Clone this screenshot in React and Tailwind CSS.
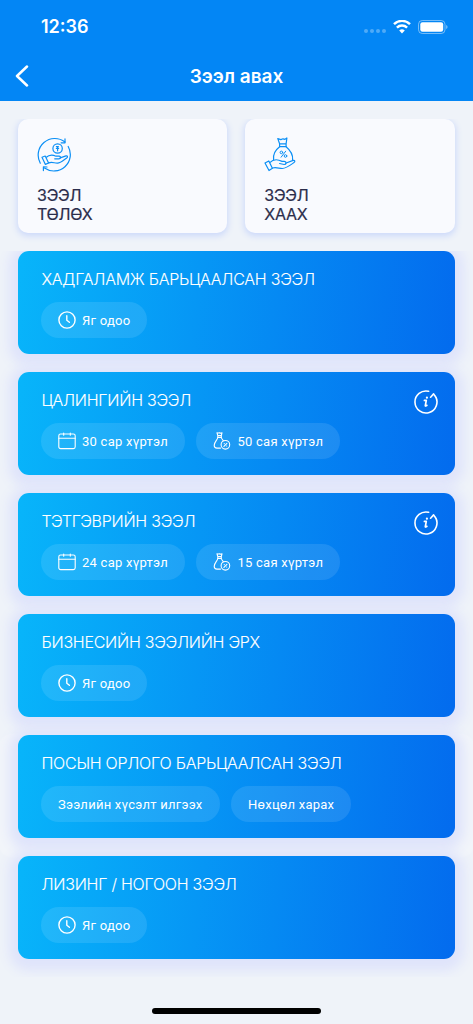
import React from 'react';

const LOANS = [
  { title: 'ХАДГАЛАМЖ БАРЬЦААЛСАН ЗЭЭЛ', chips: [{ icon: 'clock', label: 'Яг одоо' }] },
  { title: 'ЦАЛИНГИЙН ЗЭЭЛ', info: true, chips: [{ icon: 'calendar', label: '30 сар хүртэл' }, { icon: 'bag', label: '50 сая хүртэл' }] },
  { title: 'ТЭТГЭВРИЙН ЗЭЭЛ', info: true, chips: [{ icon: 'calendar', label: '24 сар хүртэл' }, { icon: 'bag', label: '15 сая хүртэл' }] },
  { title: 'БИЗНЕСИЙН ЗЭЭЛИЙН ЭРХ', chips: [{ icon: 'clock', label: 'Яг одоо' }] },
  { title: 'ПОСЫН ОРЛОГО БАРЬЦААЛСАН ЗЭЭЛ', panel: true, chips: [{ label: 'Зээлийн хүсэлт илгээх' }, { label: 'Нөхцөл харах' }] },
  { title: 'ЛИЗИНГ / НОГООН ЗЭЭЛ', chips: [{ icon: 'clock', label: 'Яг одоо' }] },
];

function ClockIcon() {
  return (
    <svg width="18" height="18" viewBox="0 0 18 18" fill="none" stroke="currentColor" strokeWidth="1.4" strokeLinecap="round" strokeLinejoin="round">
      <circle cx="9" cy="9" r="8.1" />
      <path d="M8.8 4.8v4.4l2.6 2" />
    </svg>
  );
}

function CalendarIcon() {
  return (
    <svg width="18" height="18" viewBox="0 0 18 18" fill="none" stroke="currentColor" strokeWidth="1.1" strokeLinecap="round">
      <rect x="0.8" y="2" width="16.4" height="14.6" rx="1.8" />
      <path d="M0.8 6.2h16.4M5.7 1v2.2M12.3 1v2.2" />
    </svg>
  );
}

function BagIcon() {
  return (
    <svg width="18" height="18" viewBox="0 0 18 18" fill="none" stroke="currentColor" strokeWidth="1.1" strokeLinecap="round" strokeLinejoin="round">
      <path d="M4 .8c1 .6 1.5-.2 2.5.1 1 .3 1.6.4 2.5-.1l-.7 2.8H4.8zM4.8 3.6v1.9h3.5V3.6" />
      <path d="M4.8 5.5C4.3 8 1.3 10 1.2 13.2c0 2.1 1 2.9 2.8 2.9h3.5M8.3 5.5c.3 1.3 1.1 2.2 2 3.2" />
      <circle cx="12.4" cy="12.8" r="4.3" />
      <path d="m10.9 14.3 3-3M11.2 11.6h.1M13.6 14h.1" />
    </svg>
  );
}

const CHIP_ICONS = { clock: <ClockIcon />, calendar: <CalendarIcon />, bag: <BagIcon /> };

function InfoIcon() {
  return (
    <svg className="mt-[2px] mr-px" width="24" height="24" viewBox="0 0 24 24" fill="none" stroke="currentColor" strokeWidth="1.6" strokeLinecap="round" strokeLinejoin="round">
      <path d="M14.6 1.3A11 11 0 1 0 21.2 6M16.6 7.2l3-3.3 2.6 3.8" />
      <path d="M10.4 10.4h1.9l-1 5.2c-.1.7.8.5 1.6-.2" strokeWidth="1.7" />
      <circle cx="12.9" cy="7.7" r="1.1" fill="currentColor" stroke="none" />
    </svg>
  );
}

function RepayIcon() {
  return (
    <svg width="36" height="36" viewBox="0 0 36 36" fill="none" stroke="currentColor" strokeWidth="1.2" strokeLinecap="round" strokeLinejoin="round">
      <path d="M3.3 26.2A16.6 16.6 0 0 1 28 5M31.2 9.5A16.4 16.4 0 0 1 7.5 31" />
      <path d="M28 1.9v3.9h-3.9M6.4 33.6v-3.8l3.6.2" />
      <circle cx="20.6" cy="11.5" r="4.7" />
      <path d="M19.4 9.6h2M20.6 9.6v4.2M19.4 11.4h2.2" />
      <path d="M5 20.2l3.2-1.2 3.4 7-3.2 1.4zM9 20.5c3.6-3.4 6.4-3.1 10-1.3h3.2c2 .4 1.7 2.3-.2 2.6h-4.3" />
      <path d="M23.2 20.9l5.8-2c1.6-.4 2 1 .7 2-3.7 2.6-6.2 5.4-9.5 5.2-3.2-.1-5.3-1.4-8.6-.2" />
    </svg>
  );
}

function CloseLoanIcon() {
  return (
    <svg width="32" height="36" viewBox="0 0 32 36" fill="none" stroke="currentColor" strokeWidth="1.2" strokeLinecap="round" strokeLinejoin="round">
      <path d="M15.6 6.8l-1.8-5.2 3 1 2.2-.8 2 .5 1.9-1.3-.8 5.8zM15.6 6.8h6.5v2.9h-6.5z" />
      <path d="M15.6 9.7c-4.8 3.7-6.7 8-6 13M22.1 9.7c5 4.2 7 8.8 6.5 13.2" />
      <circle cx="17.4" cy="15.4" r="1.3" strokeWidth="1" />
      <circle cx="21.5" cy="19" r="1.3" strokeWidth="1" />
      <path d="M21.7 14.2l-4.6 6" strokeWidth="1" />
      <path d="M1 26l3.8-2 3.6 7.2L5 33.5zM5.8 25.6c3.6-3.8 7.8-3.5 12.3-1.2h2.2c2.6.4 2.2 3-.2 3.1l-4.5-1" />
      <path d="M21.5 26.2l7.7-2.8c2-.2 2 1.3.8 2.2-4.3 3-7.8 5.7-11.7 5.9-3.3 0-5.8-1.5-9.8-.5" />
    </svg>
  );
}

function StatusBar() {
  return (
    <div className="flex h-[53px] items-center justify-between pl-[41px] pr-[25px]">
      <span className="text-[18px] font-semibold leading-none">12:36</span>
      <div className="flex items-center">
        <div className="mr-[7px] mt-[8px] flex gap-[2px] opacity-30">
          <i className="size-1 rounded-full bg-white" />
          <i className="size-1 rounded-full bg-white" />
          <i className="size-1 rounded-full bg-white" />
          <i className="size-1 rounded-full bg-white" />
        </div>
        <svg width="18" height="14" viewBox="0 0 18 14" fill="none" stroke="white" strokeWidth="2.4">
          <path d="M1 4.2a11.3 11.3 0 0 1 16 0M3.9 7.6a7.2 7.2 0 0 1 10.2 0" />
          <path d="M6.2 10.6a4 4 0 0 1 5.6 0L9 13.6z" fill="white" stroke="none" />
        </svg>
        <svg className="ml-[7px]" width="30" height="14" viewBox="0 0 30 14" fill="none">
          <rect x="0.5" y="0.5" width="26.5" height="13" rx="3.8" stroke="white" strokeOpacity=".45" />
          <rect x="2.3" y="2.2" width="22.9" height="9.6" rx="2.2" fill="white" />
          <path d="M28.2 5c1.8.7 1.8 3.3 0 4z" fill="white" fillOpacity=".5" />
        </svg>
      </div>
    </div>
  );
}

function ActionCard({ icon, first, second }) {
  return (
    <div className="h-[114px] flex-1 rounded-[10px] bg-[#f9fafe] px-[19px] pt-[18px] shadow-[0_2px_6px_1px_#ccd9fa]">
      <div className="h-9 text-[#0b8ff5]">{icon}</div>
      <div className="mt-[13px] font-['Inter',sans-serif] text-[16px] leading-[19px] tracking-[-0.25px] text-[#2b2d4b] [-webkit-text-stroke:0.2px_#2b2d4b]">
        <div>{first}</div>
        <div>{second}</div>
      </div>
    </div>
  );
}

function LoanCard({ loan }) {
  return (
    <div className={`pl-[18px] pr-[18.5px] pb-[18px] ${loan.panel ? 'rounded-xl bg-white/20 shadow-[0_0_3px_#ffffff99]' : ''}`}>
      <div className="flex h-[103px] justify-between rounded-[11px] bg-linear-[97deg] from-[#08b5fa] to-[#036bee] pl-[23px] pr-4 pt-4 text-white shadow-[0_3px_12px_9px_#dfe4fb]">
        <div>
          <h2 className="ml-[0.5px] mt-px font-['Inter',sans-serif] text-[16px] font-light leading-[22px] tracking-[-0.25px] whitespace-nowrap [-webkit-text-stroke:0.1px_white]">{loan.title}</h2>
          <div className="mt-3 flex gap-[11.5px]">
            {loan.chips.map((chip) => (
              <div key={chip.label} className="flex h-[36px] items-center gap-[6px] rounded-full bg-white/10 px-[17px] text-[13px] tracking-[0.25px] whitespace-nowrap">
                {chip.icon && CHIP_ICONS[chip.icon]}
                <span className="relative top-px">{chip.label}</span>
              </div>
            ))}
          </div>
        </div>
        {loan.info && <InfoIcon />}
      </div>
    </div>
  );
}

export default function App() {
  return (
    <div className="flex h-[1024px] w-[473px] flex-col bg-[#eff3f9] font-['Inter','Noto_Sans',sans-serif]">
      <header className="h-[101px] bg-[#0386f5] text-white">
        <StatusBar />
        <div className="grid h-[46px] grid-cols-[1fr_auto_1fr] items-center px-[15px]">
          <svg width="14" height="22" viewBox="0 0 14 22" fill="none" stroke="white" strokeWidth="2.5" strokeLinecap="round" strokeLinejoin="round">
            <path d="M12 1.5 2 11l10 9.5" />
          </svg>
          <h1 className="relative top-px text-[19px] font-semibold">Зээл авах</h1>
        </div>
      </header>
      <main className="h-[876px]">
        {/* shadows are cut off at the top of each scroll area */}
        <div className="mt-[18px] flex h-[132px] gap-[18px] overflow-hidden pl-[18px] pr-[18.5px]">
          <ActionCard icon={<RepayIcon />} first="ЗЭЭЛ" second="ТӨЛӨХ" />
          <ActionCard icon={<CloseLoanIcon />} first="ЗЭЭЛ" second="ХААХ" />
        </div>
        <div className="overflow-hidden font-['Roboto','Noto_Sans',sans-serif]">
          {LOANS.map((loan) => (
            <LoanCard key={loan.title} loan={loan} />
          ))}
        </div>
      </main>
      <div className="mx-auto mt-[31px] h-[6px] w-[169px] rounded-full bg-black" />
    </div>
  );
}
